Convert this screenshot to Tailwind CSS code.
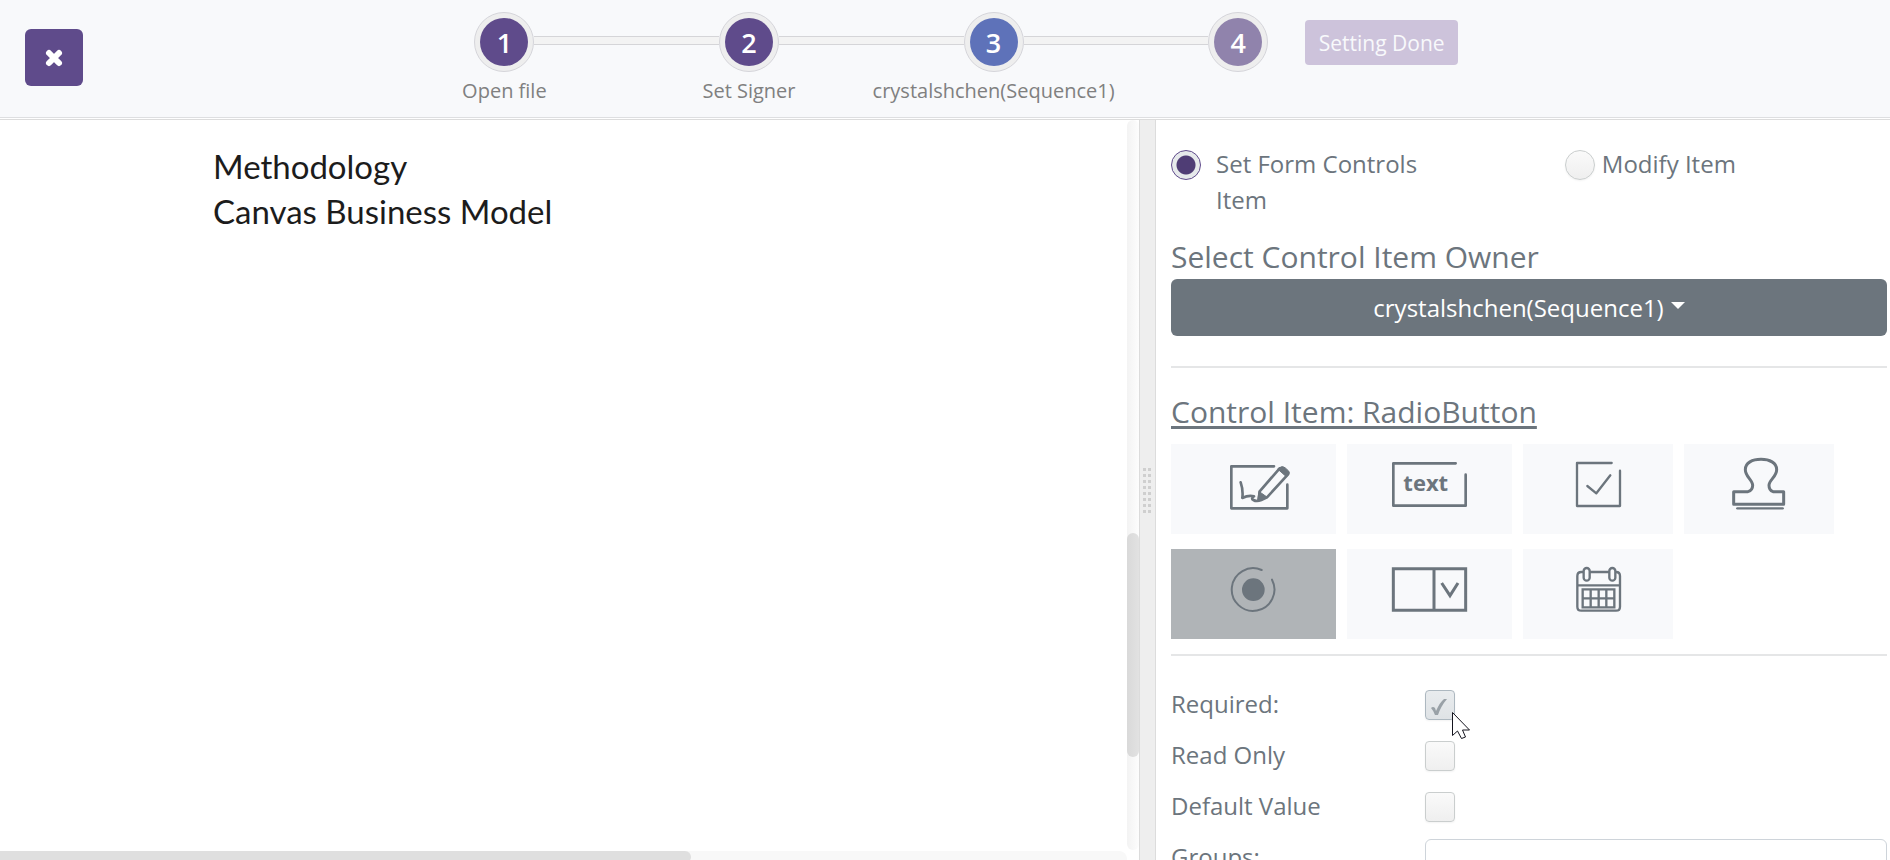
<!DOCTYPE html>
<html lang="en">
<head>
  <meta charset="UTF-8">
  <meta name="viewport" content="width=device-width, initial-scale=1">
  <title>Set Form Controls</title>
  <script src="https://cdn.jsdelivr.net/npm/@tailwindcss/browser@4"></script>
</head>
<body class="flex h-screen flex-col overflow-hidden bg-white font-['Open_Sans',sans-serif] text-2xl leading-9 text-[#6c757d]">

  <header class="grid shrink-0 grid-cols-[25.1%_42%_1fr] border-b border-[#dedfe1] bg-[#f8f9fb]">
    <div class="h-[117px] pt-[29px] pl-[25px]">
      <button type="button" aria-label="Close" class="flex h-[57px] w-[58px] items-center justify-center rounded-md bg-[#5f4b8b]">
        <svg class="size-5" viewBox="0 0 20 20" fill="none" stroke="#fff" stroke-width="6" stroke-linecap="round"><path d="M5 5L15 15M15 5L5 15"/></svg>
      </button>
    </div>

    <!-- Steps -->
    <ol class="flex pt-3 text-xl leading-7 text-[#808080]">
      <li class="flex w-15 flex-col items-center">
        <span class="flex size-15 shrink-0 items-center justify-center rounded-full border border-[#d5d5da] bg-[#eeeeee]"><span class="flex size-12 items-center justify-center rounded-full bg-[#5f4b8b] pt-0.5 text-[27px] font-semibold text-white">1</span></span>
        <span class="mt-[5px] whitespace-nowrap">Open file</span>
      </li>
      <li aria-hidden="true" class="mt-6 h-[9px] flex-1 border-y border-[#d5d5d8] bg-[#f3f3f3]"></li>
      <li class="flex w-15 flex-col items-center">
        <span class="flex size-15 shrink-0 items-center justify-center rounded-full border border-[#d5d5da] bg-[#eeeeee]"><span class="flex size-12 items-center justify-center rounded-full bg-[#5f4b8b] pt-0.5 text-[27px] font-semibold text-white">2</span></span>
        <span class="mt-[5px] whitespace-nowrap">Set Signer</span>
      </li>
      <li aria-hidden="true" class="mt-6 h-[9px] flex-1 border-y border-[#d5d5d8] bg-[#f3f3f3]"></li>
      <li class="flex w-15 flex-col items-center">
        <span class="flex size-15 shrink-0 items-center justify-center rounded-full border border-[#d5d5da] bg-[#eeeeee]"><span class="flex size-12 items-center justify-center rounded-full bg-[#5e72b9] pt-0.5 text-[27px] font-semibold text-white">3</span></span>
        <span class="mt-[5px] whitespace-nowrap">crystalshchen(Sequence1)</span>
      </li>
      <li aria-hidden="true" class="mt-6 h-[9px] flex-1 border-y border-[#d5d5d8] bg-[#f3f3f3]"></li>
      <li class="flex w-15 flex-col items-center">
        <span class="flex size-15 shrink-0 items-center justify-center rounded-full border border-[#d5d5da] bg-[#eeeeee]"><span class="flex size-12 items-center justify-center rounded-full bg-[#9083ac] pt-0.5 text-[27px] font-semibold text-white">4</span></span>
      </li>
    </ol>

    <div class="pt-5 pl-[37px]">
      <button type="button" disabled class="flex h-[45px] w-[153px] items-center justify-center rounded bg-[#cdc3db] text-[21px] text-[#f8f9fb]">Setting Done</button>
    </div>
  </header>

  <main class="mt-px flex min-h-0 flex-1 border-t border-[#dcdcdc]">

    <!-- Document -->
    <section class="flex min-w-0 flex-1">
      <div class="flex min-w-0 flex-1 flex-col">
        <div class="flex-1 pt-6 pl-[213px] font-['Lato',sans-serif] text-[33px] leading-[45px] text-[#1c1c1c]">
          <p>Methodology</p>
          <p>Canvas Business Model</p>
        </div>
        <div class="h-[9px] overflow-hidden rounded-tr-lg bg-[#f8f8f8]">
          <div class="h-3 w-[691px] rounded-r-lg bg-[#dfdfdf]"></div>
        </div>
      </div>
      <div class="mb-[10px] w-3 rounded-full bg-linear-to-r from-[#f3f3f3] to-[#fdfdfd] pt-[413px]">
        <div class="h-[224px] rounded-full bg-linear-to-r from-[#d9d9d9] to-[#e2e2e2]"></div>
      </div>
    </section>

    <!-- Splitter -->
    <div class="flex w-[17px] items-center justify-center border-x border-[#dcdcdc] bg-[#eeeeee] pr-px">
      <svg width="8" height="45" viewBox="0 0 8 45" fill="none" stroke="#cfcfcf" stroke-width="3" stroke-dasharray="3 3"><path d="M1.500 0V45M6.500 0V45"/></svg>
    </div>

    <!-- Settings panel -->
    <section class="w-[734px] overflow-hidden pt-[26px] pr-[3px] pl-[15px]">
      <div class="grid grid-cols-[55%_1fr]">
        <label class="flex w-[270px] items-start gap-[15px]">
          <input type="radio" name="mode" checked class="mt-1 size-[30px] shrink-0 appearance-none rounded-full border border-[#5f4b8b] bg-[radial-gradient(circle,#4f3d75_9px,#e6e9eb_10px)]">
          Set Form Controls Item
        </label>
        <label class="flex items-start gap-[7px]">
          <input type="radio" name="mode" class="mt-1 size-[30px] shrink-0 appearance-none rounded-full border border-[#cacece] bg-linear-to-b from-[#fafafa] to-[#efefef] shadow-xs">
          Modify Item
        </label>
      </div>

      <h2 class="mt-[21px] text-[30px]">Select Control Item Owner</h2>
      <button type="button" class="mt-1 flex h-[57px] w-full items-center justify-center gap-[7px] rounded-md bg-[#6c757d] text-white">
        crystalshchen(Sequence1)
        <svg width="14" height="7" viewBox="0 0 14 7" class="mb-1" fill="#fff"><path d="M0 0H14L7 7Z"/></svg>
      </button>
      <hr class="mt-[30px] border-t-2 border-[#e5e6e7]">

      <h2 class="mt-[26px] text-[30px] underline decoration-3 underline-offset-3">Control Item: RadioButton</h2>
      <div class="mt-[14px] flex flex-wrap gap-x-[11px] gap-y-[15px]">
        <button type="button" aria-label="Signature" class="h-[90px] w-[165px] bg-[#f8f9fb]">
          <svg class="size-full" viewBox="153 192 495 270" fill="none" stroke="#6c757d" stroke-width="8" stroke-linecap="round" stroke-linejoin="round">
            <path d="M462 259H334V385H502V314"/>
            <path d="M362 307Q370 330 367 354Q385 345 402 349Q392 357 400 360Q410 366 424 360L441 352L504 283M419 334L479 265M419 334L416 360"/>
            <path d="M477 264Q487 256 495 263L506 273Q511 279 505 285L499 290L474 268Z" fill="#6c757d" stroke-width="3"/>
            <path d="M418 335L442 352L414 362Z" fill="#6c757d" stroke-width="3"/>
          </svg>
        </button>
        <button type="button" aria-label="Text" class="h-[90px] w-[165px] bg-[#f8f9fb]">
          <svg class="size-full" viewBox="681 192 495 270" fill="none" stroke="#6c757d" stroke-width="8" stroke-linecap="round" stroke-linejoin="round">
            <path d="M1007 250H820V377H1037V284"/>
            <text x="850" y="333" fill="#6c757d" stroke="none" font-size="66" font-weight="700">text</text>
          </svg>
        </button>
        <button type="button" aria-label="CheckBox" class="h-[90px] w-[150px] bg-[#f8f9fb]">
          <svg class="size-full" viewBox="66 192 450 270" fill="none" stroke="#6c757d" stroke-width="7" stroke-linecap="round" stroke-linejoin="round">
            <path d="M332 249H228V378H357V272M259 318L286 340L328 286"/>
          </svg>
        </button>
        <button type="button" aria-label="Stamp" class="h-[90px] w-[150px] bg-[#f8f9fb]">
          <svg class="size-full" viewBox="549 192 450 270" fill="none" stroke="#6c757d" stroke-width="9" stroke-linecap="round" stroke-linejoin="round">
            <path d="M698 373V335H741Q755 331 755 316C755 300 733 290 733 269C733 248 754 238 780 238C806 238 827 248 827 269C827 290 804 300 804 316Q804 331 816 335H848V373Z"/>
            <path d="M709 385H845" stroke-width="7"/>
          </svg>
        </button>
        <button type="button" aria-label="RadioButton" aria-pressed="true" class="h-[90px] w-[165px] bg-[#b0b4b7]">
          <svg class="size-full" viewBox="153 507 495 270" fill="none" stroke="#6c757d" stroke-width="6" stroke-linecap="round">
            <path d="M425 570A64 64 0 1 0 456 599"/>
            <circle cx="400" cy="629" r="34" fill="#6c757d" stroke="none"/>
          </svg>
        </button>
        <button type="button" aria-label="DropDown" class="h-[90px] w-[165px] bg-[#f8f9fb]">
          <svg class="size-full" viewBox="681 507 495 270" fill="none" stroke="#6c757d" stroke-width="9">
            <path d="M820 566H1037V691H820ZM942 566V691M965 609L990 647L1014 609"/>
          </svg>
        </button>
        <button type="button" aria-label="Date" class="h-[90px] w-[150px] bg-[#f8f9fb]">
          <svg class="size-full" viewBox="66 507 450 270" fill="none" stroke="#6c757d" stroke-width="7">
            <path d="M247 576H241Q229 576 229 588V680Q229 692 241 692H345Q357 692 357 680V588Q357 576 345 576H342M267 576H325M229 616H357"/>
            <rect x="248" y="564" width="18" height="38" rx="9"/>
            <rect x="325" y="564" width="18" height="38" rx="9"/>
            <path d="M245 628H340V682H245ZM245 655H340M269 628V682M293 628V682M316 628V682"/>
          </svg>
        </button>
      </div>
      <hr class="mt-[15px] border-t-2 border-[#e5e6e7]">

      <div class="mt-[23px]">
        <div class="flex h-[51px] items-center">
          <label for="required" class="w-[254px] pb-0.5">Required:</label>
          <div class="relative flex">
            <input type="checkbox" id="required" checked class="size-[30px] appearance-none rounded-sm border border-[#adb8c0] bg-linear-to-b from-[#e9ecee] to-[#dfe3e6] shadow-xs">
            <svg class="pointer-events-none absolute top-2 left-1.5" width="16" height="18" viewBox="0 0 16 18" fill="#99a1a7"><path d="M0 10Q2 8 4 10L5 13Q9 4 13 1L16 1Q10 8 7 17H4Q2 12 0 10Z"/></svg>
            <!-- Mouse pointer -->
            <svg class="pointer-events-none absolute top-[22px] left-[27px]" width="19" height="28" viewBox="0 0 19 28" fill="#fff" stroke="#14141e"><path d="M.5 .5V23.500L5.500 19L9.500 26.500L13.500 25L10.500 18H17.500Z"/></svg>
          </div>
        </div>
        <div class="flex h-[51px] items-center">
          <label for="readonly" class="w-[254px] pb-0.5">Read Only</label>
          <input type="checkbox" id="readonly" class="size-[30px] appearance-none rounded-sm border border-[#cacece] bg-linear-to-b from-[#fafafa] to-[#efefef] shadow-xs">
        </div>
        <div class="flex h-[51px] items-center">
          <label for="default" class="w-[254px] pb-0.5">Default Value</label>
          <input type="checkbox" id="default" class="size-[30px] appearance-none rounded-sm border border-[#cacece] bg-linear-to-b from-[#fafafa] to-[#efefef] shadow-xs">
        </div>
        <div class="flex items-start pt-[7px]">
          <label for="groups" class="w-[254px]">Groups:</label>
          <input type="text" id="groups" class="h-[57px] min-w-0 flex-1 rounded-md border border-[#ced4da] px-[18px]">
        </div>
      </div>
    </section>
  </main>
</body>
</html>
